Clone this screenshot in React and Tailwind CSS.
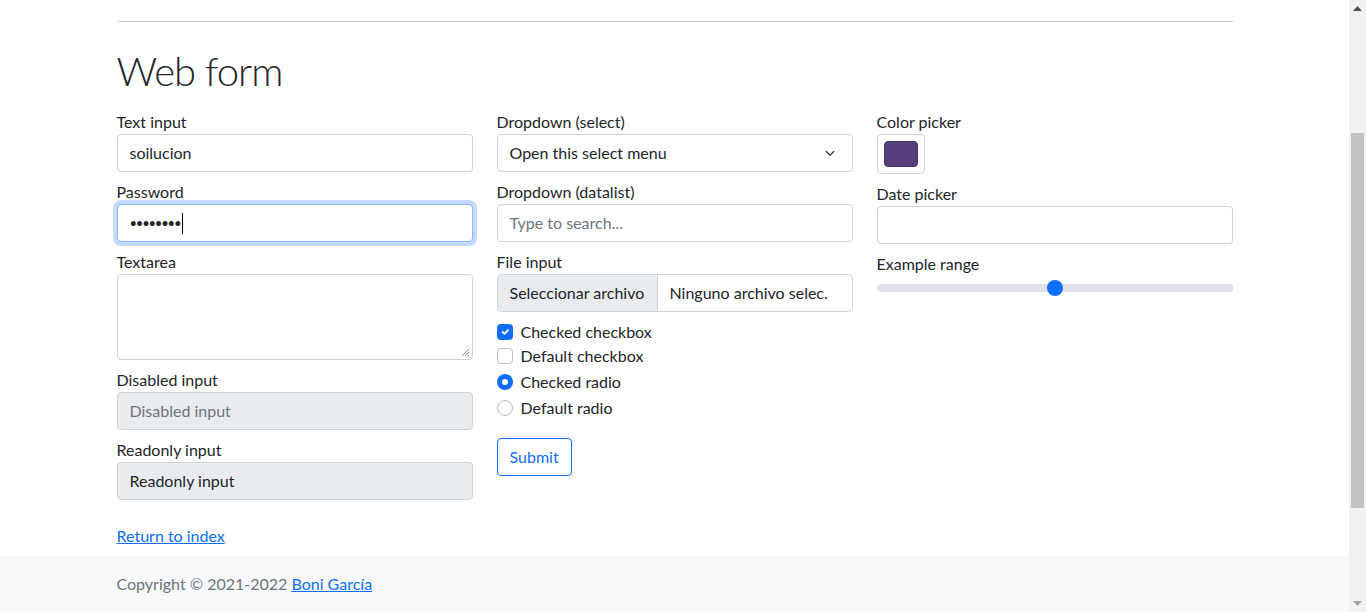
import React from "react";

function Label({ children, className = "" }) {
  return <div className={"h-6 leading-6 " + className}>{children}</div>;
}

function Field({ label, children }) {
  return (
    <div className="mb-2 flex flex-col">
      <Label>{label}</Label>
      {children}
    </div>
  );
}

const base = "h-[38px] w-full rounded border px-3 flex items-center leading-6";
const normal = base + " border-[#ced4da] bg-white";
const grey = base + " border-[#ced4da] bg-[#e9ecef]";

function CheckRow({ type, checked, label, className = "" }) {
  return (
    <div className={"flex h-6 items-center gap-2 leading-6 " + className}>
      {type === "checkbox" ? (
        checked ? (
          <span className="flex h-4 w-4 items-center justify-center rounded-[4px] bg-[#0d6efd]">
            <svg width="12" height="12" viewBox="0 0 20 20">
              <path d="M6 10l3 3 6-6" fill="none" stroke="#fff" strokeWidth="3" strokeLinecap="round" strokeLinejoin="round" />
            </svg>
          </span>
        ) : (
          <span className="h-4 w-4 rounded-[4px] border border-[#bfbfbf] bg-white" />
        )
      ) : checked ? (
        <span className="flex h-4 w-4 items-center justify-center rounded-full bg-[#0d6efd]">
          <span className="h-1.5 w-1.5 rounded-full bg-white" />
        </span>
      ) : (
        <span className="h-4 w-4 rounded-full border border-[#bfbfbf] bg-white" />
      )}
      <span>{label}</span>
    </div>
  );
}

export default function App() {
  return (
    <div className="flex h-[612px] w-[1366px] overflow-hidden bg-white font-['Lato',sans-serif] text-base text-[#212529]">
      <div className="flex w-[1349px] flex-col">
        <main className="mx-auto w-[1116px] pt-[21px]">
          <div className="border-t border-[#c8c9ca]" />
          <h1 className="mt-[25px] h-12 text-[40px] font-light leading-[48px] tracking-[-1px]">Web form</h1>
          <div className="mt-[15px] grid grid-cols-3 gap-6">
            {/* Column 1 */}
            <div className="flex flex-col">
              <Field label="Text input">
                <div className={normal}>soilucion</div>
              </Field>
              <Field label="Password">
                <div className={base + " border-[#86b7fe] bg-white shadow-[0_0_0_4px_rgba(13,110,253,0.25)]"}>
                  <span className="text-[13px] tracking-[-1.2px] text-[#212529]">••••••••</span>
                  <span className="ml-[2px] h-[21px] w-px bg-black" />
                </div>
              </Field>
              <Field label="Textarea">
                <div className="flex h-[86px] w-full items-end justify-end rounded border border-[#ced4da] bg-white p-[2px]">
                  <svg width="9" height="9" viewBox="0 0 9 9">
                    <path d="M8 1L1 8M8 4L4 8M8 7L7 8" stroke="#8a8a8a" strokeWidth="1" />
                  </svg>
                </div>
              </Field>
              <Field label="Disabled input">
                <div className={grey + " text-[#6c757d]"}>Disabled input</div>
              </Field>
              <Field label="Readonly input">
                <div className={grey}>Readonly input</div>
              </Field>
            </div>

            {/* Column 2 */}
            <div className="flex flex-col">
              <Field label="Dropdown (select)">
                <div className={normal + " justify-between"}>
                  <span>Open this select menu</span>
                  <svg width="16" height="12" viewBox="0 0 16 16" className="mr-[2px]">
                    <path d="M3 6l5 5 5-5" fill="none" stroke="#343a40" strokeWidth="1.6" strokeLinecap="round" strokeLinejoin="round" />
                  </svg>
                </div>
              </Field>
              <Field label="Dropdown (datalist)">
                <div className={normal + " text-[#6c757d]"}>Type to search...</div>
              </Field>
              <div className="flex flex-col">
                <Label>File input</Label>
                <div className="flex h-[38px] w-full overflow-hidden rounded border border-[#ced4da] bg-white leading-6">
                  <div className="flex w-[160px] items-center border-r border-[#ced4da] bg-[#e9ecef] px-3">Seleccionar archivo</div>
                  <div className="flex items-center px-3">Ninguno archivo selec.</div>
                </div>
              </div>
              <CheckRow type="checkbox" checked label="Checked checkbox" className="mt-[8px]" />
              <CheckRow type="checkbox" label="Default checkbox" />
              <CheckRow type="radio" checked label="Checked radio" className="mt-[2px]" />
              <CheckRow type="radio" label="Default radio" className="mt-[2px]" />
              <div className="mt-[18px]">
                <button className="h-[38px] rounded border border-[#0d6efd] px-3 leading-6 text-[#0d6efd]">Submit</button>
              </div>
            </div>

            {/* Column 3 */}
            <div className="flex flex-col">
              <Field label="Color picker">
                <div className="flex h-10 w-12 items-center justify-center rounded border border-[#ced4da] bg-white">
                  <span className="h-[26px] w-[34px] rounded-[4px] border border-[#4a3366] bg-[#563d7c]" />
                </div>
              </Field>
              <Field label="Date picker">
                <div className={normal} />
              </Field>
              <div className="flex flex-col">
                <Label>Example range</Label>
                <div className="flex h-6 items-center">
                  <div className="flex h-2 w-full items-center rounded-full bg-[#dee2e6]">
                    <div className="flex-1" />
                    <span className="h-4 w-4 rounded-full bg-[#0d6efd]" />
                    <div className="flex-1" />
                  </div>
                </div>
              </div>
            </div>
          </div>
          <div className="mt-4 h-6 leading-6">
            <a href="#" className="text-[#0d6efd] underline">Return to index</a>
          </div>
        </main>
        <footer className="mt-2 h-[56px] bg-[#f8f9fa]">
          <div className="mx-auto w-[1116px] pt-4 leading-6 text-[#6c757d]">
            Copyright © 2021-2022{" "}
            <a href="#" className="text-[#0d6efd] underline">Boni García</a>
          </div>
        </footer>
      </div>

      {/* Scrollbar */}
      <div className="flex h-full w-[17px] flex-col items-center bg-[#f1f1f1]">
        <div className="flex h-[17px] w-full items-center justify-center">
          <svg width="9" height="5" viewBox="0 0 9 5">
            <path d="M4.5 0L9 5H0z" fill="#505050" />
          </svg>
        </div>
        <div className="h-[116px]" />
        <div className="h-[375px] w-[13px] bg-[#c1c1c1]" />
        <div className="flex-1" />
        <div className="flex h-[17px] w-full items-center justify-center">
          <svg width="9" height="5" viewBox="0 0 9 5">
            <path d="M0 0H9L4.5 5z" fill="#a3a3a3" />
          </svg>
        </div>
      </div>
    </div>
  );
}
